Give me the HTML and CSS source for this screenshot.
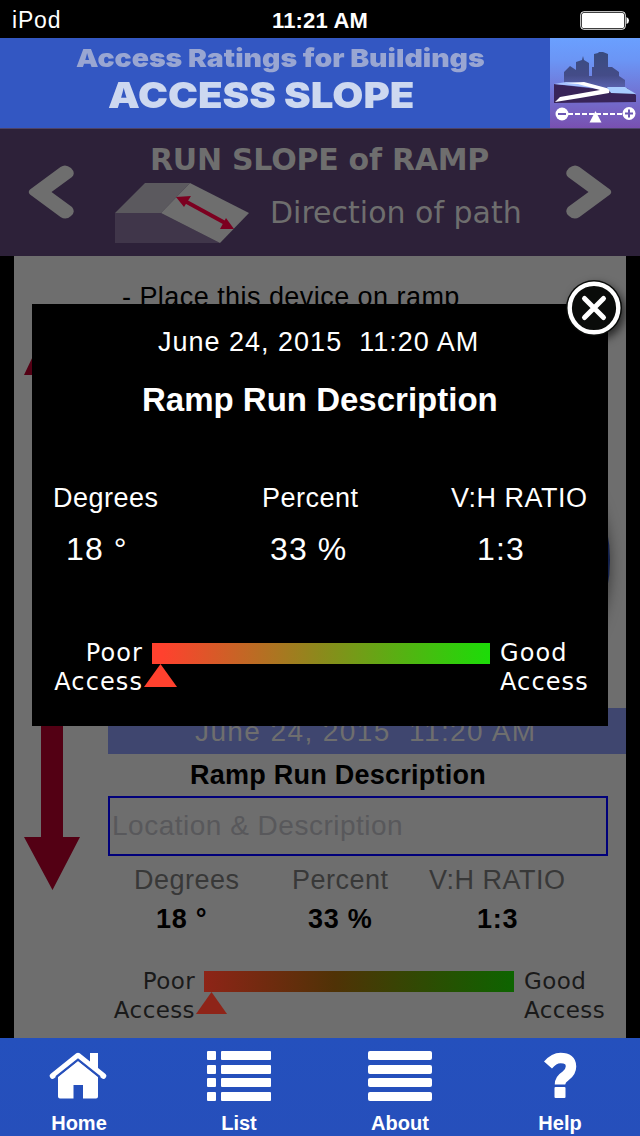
FILE: index.html
```html
<!DOCTYPE html>
<html lang="en">
  <head>
    <meta charset="utf-8">
    <title>Access Slope</title>
    <meta name="viewport" content="width=device-width, initial-scale=1.0">
    <link rel="stylesheet" href="styles.css">
  </head>
  <body>
    <div id="status">
      <span class="device">iPod</span>
      <span class="time">11:21 AM</span>
      <svg class="battery" width="50" height="20" viewBox="0 0 50 20">
        <rect x="0.75" y="0.75" width="44.5" height="17.5" rx="3" fill="none" stroke="white" stroke-width="1"></rect>
        <rect x="2" y="2" width="42" height="15" rx="1.5" fill="white"></rect>
        <path d="M46.5 6 q2.5 1 2.5 3.5 t-2.5 3.5z" fill="white"></path>
      </svg>
    </div>

    <header>
      <div id="titles">
        <h2>Access Ratings for Buildings</h2>
        <h1>ACCESS SLOPE</h1>
      </div>
      <svg id="logo" width="90" height="90" viewBox="0 0 90 90">
        <defs>
          <linearGradient id="sky" x1="0" y1="0" x2="0" y2="1">
            <stop offset="0" stop-color="#6aa0ff"></stop>
            <stop offset="0.25" stop-color="#6b95f5"></stop>
            <stop offset="1" stop-color="#7850b0"></stop>
          </linearGradient>
          <linearGradient id="city" x1="0" y1="0" x2="0" y2="1">
            <stop offset="0" stop-color="#384c80"></stop>
            <stop offset="0.6" stop-color="#444c88"></stop>
            <stop offset="1" stop-color="#6068b8"></stop>
          </linearGradient>
        </defs>
        <rect width="90" height="90" fill="url(#sky)"></rect>
        <path d="M14 48V34l6-6 6 4V24l6-2 1-4 1 4 5 3v13h3V29h2V16l4-1 1-1h4l5 2v13h4l7 5v4l6 4v11z" fill="url(#city)"></path>
        <path d="M4 46l52 6 6-3 15 1 9 7v7l-82 1z" fill="#382458"></path>
        <path d="M4 46l12-2 18 1 24 6h-4z" fill="#a8c4ff"></path>
        <path d="M16 45l18-1 26 7-1 4-29 5-25 4 5-5 40-7-22-6z" fill="white"></path>
        <path d="M57 49l18 0 11 7-25-1z" fill="#a8ccff"></path>
        <path d="M18 76h54" stroke="white" stroke-width="2" stroke-dasharray="5 2"></path>
        <circle cx="12" cy="76" r="6.5" fill="white"></circle>
        <circle cx="79" cy="75.5" r="6.5" fill="white"></circle>
        <path d="M8 76h8M75 75.5h8M79 71.5v8" stroke="#6c58b4" stroke-width="2"></path>
        <path d="M45.5 73l6 11.5h-12z" fill="white"></path>
      </svg>
    </header>

    <section id="ramp">
      <svg class="prev" width="48" height="56" viewBox="0 0 48 56">
        <path d="M20 24Q24 21 38 10M20 32Q24 35 38 46" fill="none" stroke="#6e6e6e" stroke-width="5"></path>
        <path d="M3 25.5L33.5 3Q38.500 -0.500 44 4Q49 9 45 13L24.500 28L45 43Q49 48 44 52Q39 56.500 33.500 53L3 30.500Q0.500 28 3 25.500z" fill="#6e6e6e"></path>
      </svg>
      <div class="ramp_text">
        <h3>RUN SLOPE of RAMP</h3>
        <div class="direction">
          <svg width="136" height="62" viewBox="0 0 136 62">
            <path d="M0 30L30 0h45L46 30z" fill="#5b595e"></path>
            <path d="M0 30h46l59 30H0z" fill="#40364a"></path>
            <path d="M75 0l59 30-29 30-59-30z" fill="#6e6e6e"></path>
            <path d="M68 17l44 24" stroke="#7c0020" stroke-width="4"></path>
            <path d="M61 14l15-1-7 11zM119 46l-14 0 6-11z" fill="#7c0020"></path>
          </svg>
          <span>Direction of path</span>
        </div>
      </div>
      <svg class="next" width="48" height="56" viewBox="0 0 48 56">
        <g transform="translate(48 0) scale(-1 1)">
          <path d="M3 25.5L33.5 3Q38.5 -0.5 44 4Q49 9 45 13L24.5 28L45 43Q49 48 44 52Q39 56.5 33.5 53L3 30.5Q0.5 28 3 25.5z" fill="#6e6e6e"></path>
        </g>
      </svg>
    </section>

    <main>
      <svg id="arrow" width="56" height="574" viewBox="0 0 56 574">
        <path d="M28 0L56 59H39V521H56L28.5 574L0 521H17V59H0z" fill="#530014"></path>
      </svg>

      <div id="reading">
        <p class="hint">- Place this device on ramp</p>
        <div class="gauge"></div>
        <div class="date">June 24, 2015&nbsp; 11:20 AM</div>
        <h4>Ramp Run Description</h4>
        <div class="field">Location &amp; Description</div>
        <div class="labels">
          <span>Degrees</span><span>Percent</span><span>V:H RATIO</span>
        </div>
        <div class="values">
          <span>18 °</span><span>33 %</span><span>1:3</span>
        </div>
        <div class="scale">
          <div class="poor">Poor<br>Access</div>
          <div class="meter">
            <div class="bar"></div>
            <svg width="31" height="22" viewBox="0 0 31 22"><path d="M15.5 0L31 22H0z" fill="#8e2418"></path></svg>
          </div>
          <div class="good">Good<br>Access</div>
        </div>
      </div>
    </main>

    <nav>
      <a>
        <svg width="64" height="54" viewBox="0 0 64 54">
          <path d="M6 28L31.5 7.5L57 28" transform="translate(-0.5 0)" fill="none" stroke="white" stroke-width="5.5" stroke-linejoin="round" stroke-linecap="round"></path>
          <path d="M43 5h8v18l-8-7zM31 13L51 29V48.5q0 2-2 2H36V37H26.5V50.5H13q-2 0-2-2V29z" fill="white"></path>
          <path d="M9 29L31 11.5L53 29" fill="none" stroke="#264fbb" stroke-width="2"></path>
        </svg>
        Home
      </a>
      <a>
        <svg width="64" height="54" viewBox="0 0 64 54" fill="white">
          <rect x="0" y="3" width="9" height="9" rx="1"></rect><rect x="14" y="3" width="50" height="9" rx="1"></rect>
          <rect x="0" y="17" width="9" height="9" rx="1"></rect><rect x="14" y="17" width="50" height="9" rx="1"></rect>
          <rect x="0" y="30" width="9" height="9" rx="1"></rect><rect x="14" y="30" width="50" height="9" rx="1"></rect>
          <rect x="0" y="44" width="9" height="9" rx="1"></rect><rect x="14" y="44" width="50" height="9" rx="1"></rect>
        </svg>
        List
      </a>
      <a class="shift">
        <svg width="64" height="54" viewBox="0 0 64 54" fill="white">
          <rect y="3" width="64" height="9" rx="2"></rect>
          <rect y="17" width="64" height="9" rx="2"></rect>
          <rect y="30" width="64" height="9" rx="2"></rect>
          <rect y="44" width="64" height="9" rx="2"></rect>
        </svg>
        About
      </a>
      <a class="shift">
        <svg width="64" height="54" viewBox="0 0 64 54">
          <path d="M20 17Q26 10 32.5 10Q43 10 43 18.5Q43 24 37.5 28Q32 31.5 32 36.5" fill="none" stroke="white" stroke-width="10.5"></path>
          <rect x="26.5" y="39" width="11" height="11" rx="1" fill="white"></rect>
        </svg>
        Help
      </a>
    </nav>

    <div id="popup">
      <svg id="close" width="72" height="72" viewBox="0 0 72 72">
        <circle cx="36" cy="36" r="28" fill="#0a0c0a"></circle>
        <circle cx="36" cy="36" r="24.3" fill="none" stroke="white" stroke-width="4.4"></circle>
        <path d="M26.5 26.5l19 19M45.5 26.5l-19 19" stroke="white" stroke-width="5" stroke-linecap="round"></path>
      </svg>
      <div class="date">June 24, 2015&nbsp; 11:20 AM</div>
      <h4>Ramp Run Description</h4>
      <div class="labels">
        <span>Degrees</span><span>Percent</span><span>V:H RATIO</span>
      </div>
      <div class="values">
        <span>18 °</span><span>33 %</span><span>1:3</span>
      </div>
      <div class="scale">
        <div class="poor">Poor<br>Access</div>
        <div class="meter">
          <div class="bar"></div>
          <svg width="33" height="23" viewBox="0 0 33 23"><path d="M16.5 0L33 23H0z" fill="#ff412e"></path></svg>
        </div>
        <div class="good">Good<br>Access</div>
      </div>
    </div>
  </body>
</html>
```
FILE: styles.css
```css
* {
  box-sizing: border-box;
}

html, body {
  margin: 0;
  padding: 0;
  background: black;
  color: white;

  font-family: "Liberation Sans", Helvetica, Arial, sans-serif;
}

body {
  position: relative;
  width: 640px;
  height: 1136px;
  overflow: hidden;
}

h1, h2, h3, h4, p {
  margin: 0;
}

svg {
  display: block;
  flex: none;
}

#status {
  height: 38px;
  padding: 3px 10px 0 12px;

  display: grid;
  grid-template-columns: 1fr auto 1fr;
  align-items: center;
  font-size: 23px;
}

#status .device {
  letter-spacing: 0.8px;
}

#status .time {
  font-size: 22px;
  font-weight: bold;
  letter-spacing: 0.2px;
  margin-right: 2px;
}

#status .battery {
  justify-self: end;
}

header {
  height: 90px;
  display: flex;
  background: #3357c2;
}

#titles {
  flex: 1;
  font-family: Inter, "Arial Black", sans-serif;
  white-space: nowrap;
}

#titles h1, #titles h2 {
  width: max-content;
  font-weight: 900;
  transform-origin: left;
}

#titles h2 {
  margin: 5px 0 0 76px;
  font-size: 25px;
  line-height: 30px;
  transform: scaleX(1.137);
  color: #99a6d2;
}

#titles h1 {
  margin: 4px 0 0 108px;
  font-size: 36px;
  line-height: 36px;
  transform: scaleX(1.115);
  color: #cdd8f0;
}

#ramp {
  height: 128px;
  padding: 0 27px;
  border-top: 1px solid #4c4368;

  display: flex;
  justify-content: space-between;
  background: #2d2139;
  color: #6e6e6e;
  font-family: "DejaVu Sans", Verdana, sans-serif;
}

#ramp .prev, #ramp .next {
  margin-top: 35px;
}

.ramp_text {
  width: 440px;
  padding-left: 15px;
  white-space: nowrap;
}

.ramp_text h3 {
  margin: 13px 0 0 35px;
  font-size: 30px;
  line-height: 36px;
  letter-spacing: -0.25px;
}

.direction {
  margin-top: 5px;
  display: flex;
  gap: 19px;
}

.direction span {
  font-size: 30px;
  line-height: 60px;
}

main {
  height: 782px;
  margin: 0 14px;
  padding: 0 0 0 10px;

  display: flex;
  background: #6e6e6e;
  color: black;
}

#arrow {
  margin-top: 60px;
}

#reading {
  flex: 1;
  padding-left: 28px;
}

#reading .hint {
  height: 60px;
  margin: 26px 0 0 14px;
  font-size: 27px;
  line-height: 30px;
  letter-spacing: 0.45px;
}

.gauge {
  width: 300px;
  height: 300px;
  margin: 68px 0 -2px 202px;
  border-radius: 50%;
  background: #12204c;
  box-shadow: 0 5px 14px 0 #00000080;
}

#reading .date {
  position: relative;
  height: 46px;
  background: #3f466f;
  color: #6e6e6e;
  font-size: 28px;
  line-height: 48px;
  letter-spacing: 1.4px;
  padding-left: 87px;
}

#reading h4 {
  margin: 6px 0 5px 82px;
  font-size: 27px;
  line-height: 31px;
  letter-spacing: 0.25px;
}

.field {
  width: 500px;
  height: 60px;
  padding-left: 2px;
  border: 2px solid #00007a;
  color: #58585b;
  font-size: 28px;
  line-height: 56px;
  letter-spacing: 0.5px;
}

.labels, .values {
  display: grid;
  white-space: nowrap;
}

#reading .labels {
  grid-template-columns: 158px 137px auto;
  padding: 9px 0 0 26px;
  color: #383838;
  font-size: 27px;
  line-height: 31px;
  letter-spacing: 0.5px;
}

#reading .values {
  grid-template-columns: 152px 169px auto;
  padding: 8px 0 0 48px;
  font-size: 27px;
  line-height: 31px;
  font-weight: bold;
  letter-spacing: 0.7px;
}

.scale {
  display: flex;
  font-family: "DejaVu Sans", Verdana, sans-serif;
  font-size: 24px;
  line-height: 29px;
  letter-spacing: 1.1px;
}

.poor {
  text-align: right;
}

#reading .scale {
  margin-top: 32px;
  font-size: 23px;
  letter-spacing: 0.4px;
  color: #1a1a1a;
}

#reading .poor {
  width: 87px;
}

#reading .meter {
  width: 310px;
  margin: 4px 10px 0 9px;
}

#reading .bar {
  height: 21px;
  background: linear-gradient(to right, #8e2417, #503206 42%, #0d6400);
}

#reading .meter svg {
  margin-left: -8px;
}

nav {
  height: 98px;
  display: grid;
  grid-template-columns: repeat(4, 160px);
  background: linear-gradient(#2450bd, #264fbb);
}

nav a {
  padding: 10px 2px 0 0;
  display: flex;
  flex-direction: column;
  align-items: center;
  font-size: 20px;
  line-height: 42px;
  font-weight: bold;
}

nav .shift {
  padding-right: 0;
}

#popup {
  position: absolute;
  left: 32px;
  top: 304px;
  width: 576px;
  height: 422px;
  padding-top: 22px;
  background: black;
}

#close {
  position: absolute;
  right: -22px;
  top: -32px;
  filter: drop-shadow(3px 4px 4px #000000a0);
}

#popup .date {
  padding-left: 126px;
  font-size: 27px;
  line-height: 32px;
  letter-spacing: 1px;
}

#popup h4 {
  margin: 22px 0 0 110px;
  font-size: 33px;
  line-height: 40px;
}

#popup .labels {
  grid-template-columns: 209px 189px auto;
  padding: 63px 0 0 21px;
  font-size: 27px;
  line-height: 30px;
  letter-spacing: 0.5px;
}

#popup .values {
  grid-template-columns: 204px 207px auto;
  padding: 17px 0 0 34px;
  font-size: 32px;
  line-height: 38px;
  letter-spacing: 1.1px;
}

#popup .scale {
  margin-top: 71px;
}

#popup .poor {
  width: 111px;
}

#popup .meter {
  width: 338px;
  margin: 4px 10px 0 9px;
}

#popup .bar {
  height: 21px;
  background: linear-gradient(to right, #ff412e 3%, #8b8a1c 50%, #1cdc08);
}

#popup .meter svg {
  margin-left: -8px;
}
```
